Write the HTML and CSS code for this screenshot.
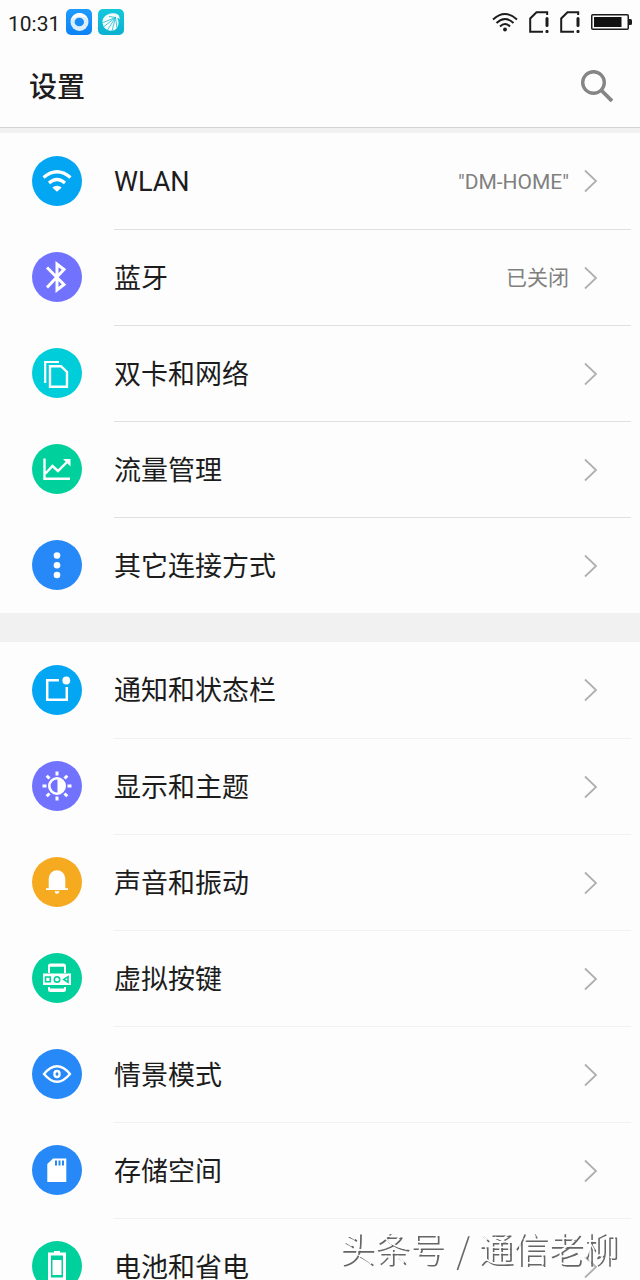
FILE: index.html
```html
<!DOCTYPE html>
<html lang="zh-CN">
<head>
<meta charset="utf-8">
<meta name="viewport" content="width=device-width, initial-scale=1">
<title>设置</title>
<link rel="stylesheet" href="styles.css">
</head>
<body>
<svg class="defs" aria-hidden="true">
  <symbol id="chevron" viewBox="0 0 14 24"><path d="M1 1.500L12 12L1 22.500" fill="none" stroke="#b0b0b0" stroke-width="1.800"/></symbol>
  <symbol id="sim" viewBox="0 0 20 22"><path d="M18.200 4V1.200H7.500L1.200 7.500V20.800H14" fill="none" stroke="#1c1c1c" stroke-width="2"/><path d="M18 7.500v7" stroke="#1c1c1c" stroke-width="3" stroke-linecap="round"/><rect x="16.500" y="19" width="3" height="3" rx="1" fill="#1c1c1c"/></symbol>
</svg>
<div class="screen">
  <div class="status">
    <div class="status-side">
      <span class="clock">10:31</span>
      <svg class="app-icon" viewBox="0 0 26 26" aria-hidden="true">
        <defs><linearGradient id="blue" x2="0" y2="1"><stop stop-color="#1e9bff"/><stop offset="1" stop-color="#0b83f5"/></linearGradient></defs>
        <rect width="26" height="26" rx="5" fill="url(#blue)"/>
        <circle cx="13.500" cy="13" r="9" fill="#dceefd"/>
        <path d="M4.700 11a9 9 0 0 1 17.600 0c-5-5-12-4-17.600 0z" fill="#fff"/>
        <ellipse cx="13.300" cy="13" rx="4.700" ry="4.300" fill="#178df5"/>
      </svg>
      <svg class="app-icon" viewBox="0 0 26 26" aria-hidden="true">
        <defs><linearGradient id="teal" x2="0" y2="1"><stop stop-color="#12c9dc"/><stop offset="1" stop-color="#0ab0cf"/></linearGradient></defs>
        <rect width="26" height="26" rx="5" fill="url(#teal)"/>
        <path d="M14.500 4.200c-6 .5-10 4-10 8.300 0 6 4 9.500 9 9.200 4 0 6.500-3 7-7 .2-2-.2-4-1.500-5.500 1.500-.2 2 .2 2.500 1.500.8-4-2-6.800-7-6.500z" fill="#f4fcfd"/>
        <path d="M17.500 8.500L5 13.500M17.500 8.500L6 17.500M17.500 8.500L9.500 21M17.500 8.500L14 22M17.500 8.500L19 19M11 7.500l7 1" stroke="#14bdd3" stroke-width=".8" fill="none"/>
      </svg>
    </div>
    <div class="status-side status-right">
      <svg class="i-wifi" viewBox="0 0 26 20" aria-hidden="true"><path d="M1 7.500Q13-3.500 25 7.500M4.500 11Q13 3 21.500 11M8 14.500Q13 9.500 18 14.500" fill="none" stroke="#1c1c1c" stroke-width="1.900"/><circle cx="13" cy="17.500" r="1.900" fill="#1c1c1c"/></svg>
      <svg class="i-sim" aria-hidden="true"><use href="#sim"/></svg>
      <svg class="i-sim" aria-hidden="true"><use href="#sim"/></svg>
      <svg class="i-battery" viewBox="0 0 41 16" aria-hidden="true"><rect x=".75" y=".75" width="36.500" height="14.500" rx="1" fill="none" stroke="#1c1c1c" stroke-width="1.500"/><rect x="3" y="3" width="27.500" height="10" fill="#111"/><path d="M38 5h1.500q1.500 0 1.500 1.500v3q0 1.500-1.500 1.500H38z" fill="#1c1c1c"/></svg>
    </div>
  </div>
  <header class="header">
    <h1 class="title">设置</h1>
    <button class="search" type="button" aria-label="搜索"><svg viewBox="0 0 32 32"><circle cx="12.500" cy="12.500" r="10.800" fill="none" stroke="#858585" stroke-width="3.400"/><path d="M20.500 20.500L31 31" stroke="#858585" stroke-width="3.800"/></svg></button>
  </header>
  <main class="list">
    <nav class="group">
      <a class="row" href="#wlan">
        <svg class="badge sky" viewBox="0 0 50 50"><path d="M11.500 21.500Q25 10 38.500 21.500M17 27Q25 20 33 27" fill="none" stroke="#fff" stroke-width="3.200"/><path d="M20.300 31.500Q25 28 29.700 31.500L25 35.700z" fill="#fff"/></svg>
        <span class="body"><span class="label">WLAN</span><span class="value">"DM-HOME"</span><svg class="chevron"><use href="#chevron"/></svg></span>
      </a>
      <a class="row" href="#bluetooth">
        <svg class="badge violet" viewBox="0 0 50 50"><path d="M15 15.500L32 32.500L25 38V12L32 17.500L15 35.500" fill="none" stroke="#fff" stroke-width="3"/></svg>
        <span class="body"><span class="label">蓝牙</span><span class="value">已关闭</span><svg class="chevron"><use href="#chevron"/></svg></span>
      </a>
      <a class="row" href="#sim-network">
        <svg class="badge cyan" viewBox="0 0 50 50"><path d="M13.200 35V14H27" fill="none" stroke="#fff" stroke-width="2.200"/><path d="M18 18.200H29L35 24V38.700H18z" fill="none" stroke="#fff" stroke-width="2.400"/></svg>
        <span class="body"><span class="label">双卡和网络</span><svg class="chevron"><use href="#chevron"/></svg></span>
      </a>
      <a class="row" href="#data">
        <svg class="badge green" viewBox="0 0 50 50"><path d="M12.500 14.500V34.700H38M13.500 29.500L20.500 22L26 27L36 17" fill="none" stroke="#fff" stroke-width="2.400"/><path d="M31 15H38.500V22.500z" fill="#fff"/></svg>
        <span class="body"><span class="label">流量管理</span><svg class="chevron"><use href="#chevron"/></svg></span>
      </a>
      <a class="row" href="#connections">
        <svg class="badge blue" viewBox="0 0 50 50"><g fill="#fff"><circle cx="25" cy="15.500" r="3.300"/><circle cx="25" cy="25.200" r="3.300"/><circle cx="25" cy="35" r="3.300"/></g></svg>
        <span class="body"><span class="label">其它连接方式</span><svg class="chevron"><use href="#chevron"/></svg></span>
      </a>
    </nav>
    <nav class="group faint">
      <a class="row" href="#notifications">
        <svg class="badge sky" viewBox="0 0 50 50"><path d="M27 15.200H15.200V34.800H34.800V22" fill="none" stroke="#fff" stroke-width="2.500"/><circle cx="34.300" cy="15.500" r="3.900" fill="#fff"/></svg>
        <span class="body"><span class="label">通知和状态栏</span><svg class="chevron"><use href="#chevron"/></svg></span>
      </a>
      <a class="row" href="#display">
        <svg class="badge violet" viewBox="0 0 50 50"><circle cx="25" cy="25" r="7.700" fill="none" stroke="#fff" stroke-width="2.600"/><path d="M25.500 18a7 7 0 0 1 0 14z" fill="#fff"/><path d="M25 10.500v4M25 35.500v4M10.500 25h4M35.500 25h4M14.700 14.700l2.800 2.800M32.500 32.500l2.800 2.800M14.700 35.300l2.800-2.800M32.500 17.500l2.800-2.800" stroke="#fff" stroke-width="3"/></svg>
        <span class="body"><span class="label">显示和主题</span><svg class="chevron"><use href="#chevron"/></svg></span>
      </a>
      <a class="row" href="#sound">
        <svg class="badge amber" viewBox="0 0 50 50"><path d="M14 33V31.200H16.700V21.500a8.300 8.300 0 0 1 16.600 0V31.200H36V33zM22.500 34.200h5q-.5 2.800-2.500 2.800t-2.500-2.800z" fill="#fff"/></svg>
        <span class="body"><span class="label">声音和振动</span><svg class="chevron"><use href="#chevron"/></svg></span>
      </a>
      <a class="row" href="#keys">
        <svg class="badge green" viewBox="0 0 50 50"><path d="M16 20V13q0-2.500 2.500-2.500h13q2.500 0 2.500 2.500V20h-2v-6.200H18V20zM16 34h2v1.500h14V34h2v2.500q0 2.500-2.500 2.500h-13q-2.500 0-2.500-2.500zM11 20.500H39V32H11z" fill="#fff"/><g fill="none" stroke="#00d09b" stroke-width="1.600"><path d="M13.500 24h4.800v4.800h-4.800zM36 23.700v5.500l-4.300-2.700z"/><circle cx="25" cy="26.400" r="2.700"/></g></svg>
        <span class="body"><span class="label">虚拟按键</span><svg class="chevron"><use href="#chevron"/></svg></span>
      </a>
      <a class="row" href="#modes">
        <svg class="badge blue" viewBox="0 0 50 50"><path d="M12 25Q25 9.500 38 25Q25 40.500 12 25z" fill="none" stroke="#fff" stroke-width="2.300"/><ellipse cx="25" cy="25" rx="2.600" ry="3" fill="none" stroke="#fff" stroke-width="2.300"/></svg>
        <span class="body"><span class="label">情景模式</span><svg class="chevron"><use href="#chevron"/></svg></span>
      </a>
      <a class="row" href="#storage">
        <svg class="badge blue" viewBox="0 0 50 50"><path d="M21 13.500H34.300V37H15.300V19z" fill="#fff"/><path d="M24 15.500v5M27.500 15.500v5M31 15.500v5" stroke="#2789f8" stroke-width="2"/></svg>
        <span class="body"><span class="label">存储空间</span><svg class="chevron"><use href="#chevron"/></svg></span>
      </a>
      <a class="row" href="#battery">
        <svg class="badge green" viewBox="0 0 50 50"><path d="M22 10h6v1.500h6V39H16V11.500h6z" fill="#fff"/><path d="M19 14.500H31V36.500H19z" fill="#00d09b"/><path d="M20.500 19H29.500V34H20.500z" fill="#fff"/></svg>
        <span class="body"><span class="label">电池和省电</span><svg class="chevron"><use href="#chevron"/></svg></span>
      </a>
    </nav>
  </main>
  <div class="watermark"><span>头条号</span> <span>/</span> <span>通信老柳</span></div>
</div>
</body>
</html>
```
FILE: styles.css
```css
* {
  box-sizing: border-box;
}

body {
  margin: 0;
  background: #fdfdfd;
  color: #1c1c1c;
  font-family: Roboto, "Noto Sans CJK SC", sans-serif;
}

.defs {
  display: none;
}

.screen {
  position: relative;
  display: flex;
  flex-direction: column;
  height: 100vh;
  overflow: hidden;
}

.status {
  display: flex;
  flex: none;
  justify-content: space-between;
  align-items: center;
  height: 44px;
  padding: 0 8px;
}

.status-side {
  display: flex;
  align-items: center;
  gap: 6px;
}

.status-right {
  gap: 11px;
}

.clock {
  padding-top: 3px;
  font-size: 21px;
  line-height: 26px;
}

.app-icon {
  width: 26px;
  height: 26px;
}

.i-wifi {
  width: 26px;
  height: 20px;
}

.i-sim {
  width: 20px;
  height: 22px;
}

.i-battery {
  width: 41px;
  height: 16px;
}

.header {
  display: flex;
  flex: none;
  justify-content: space-between;
  align-items: center;
  height: 84px;
  padding: 0 27px 0 29px;
  border-bottom: 1px solid #d4d4d4;
}

.title {
  margin: 0;
  padding-top: 4px;
  font-size: 28px;
  font-weight: 500;
  line-height: 40px;
}

.search {
  width: 32px;
  height: 32px;
  padding: 0;
  border: 0;
  background: none;
}

.search svg {
  display: block;
  width: 32px;
  height: 32px;
}

.list {
  display: flex;
  flex: 1;
  flex-direction: column;
  gap: 29px;
  min-height: 0;
  padding-top: 5px;
  overflow-y: auto;
  background: #f1f1f1;
  scrollbar-width: none;
}

.group {
  flex: none;
  background: #fdfdfd;
}

.row {
  display: flex;
  align-items: center;
  gap: 32px;
  height: 96px;
  padding: 0 9px 0 32px;
  color: inherit;
  text-decoration: none;
}

.badge {
  flex: none;
  width: 50px;
  height: 50px;
  border-radius: 50%;
}

.sky { background: #03a6f2; }
.violet { background: #7173ff; }
.cyan { background: #00cdda; }
.green { background: #00d09b; }
.blue { background: #2789f8; }
.amber { background: #f5aa20; }

.body {
  display: flex;
  flex: 1;
  align-items: center;
  gap: 15px;
  height: 96px;
  padding-right: 33px;
}

.row + .row .body {
  border-top: 1px solid #e1e1e1;
}

.faint .row + .row .body {
  border-top-color: #f1f1f1;
}

.label {
  flex: 1;
  padding-top: 2px;
  font-size: 27px;
  line-height: 40px;
}

.value {
  padding-top: 1px;
  color: #808080;
  font-size: 21px;
  line-height: 30px;
}

.chevron {
  flex: none;
  width: 14px;
  height: 24px;
}

.watermark {
  position: absolute;
  right: 22px;
  bottom: 8px;
  display: flex;
  gap: 10px;
  color: #fff;
  font-family: "Noto Sans CJK SC", sans-serif;
  font-size: 35px;
  font-weight: 300;
  line-height: 50px;
  text-shadow: 2px 2px 0 #666;
  pointer-events: none;
}
```
